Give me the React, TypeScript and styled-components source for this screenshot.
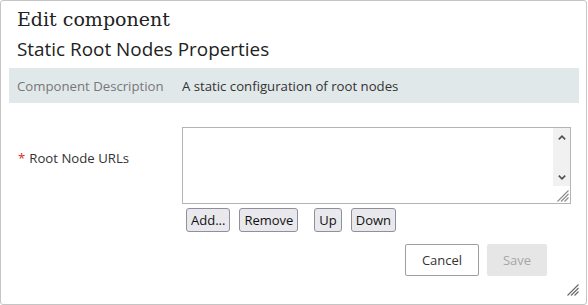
import React from "react";
import styled, { createGlobalStyle } from "styled-components";

const GlobalStyle = createGlobalStyle`
  html, body {
    margin: 0;
    padding: 0;
    background: #ffffff;
  }
  body {
    font-family: "Open Sans", "Noto Sans", sans-serif;
    color: #333333;
  }
`;

const Grip: React.FC<{ color: string }> = ({ color }) => (
  <svg width="12" height="12" viewBox="0 0 12 12" stroke={color} strokeWidth="1.1">
    <line x1="11.5" y1="0.5" x2="0.5" y2="11.5" />
    <line x1="11.5" y1="4" x2="4" y2="11.5" />
    <line x1="11.5" y1="7.5" x2="7.5" y2="11.5" />
  </svg>
);

const Chevron: React.FC<{ up?: boolean }> = ({ up }) => (
  <svg width="8" height="5" viewBox="0 0 8 5" fill="none" stroke="#505050" strokeWidth="1.6">
    {up ? <polyline points="0.8,4.4 4,1.2 7.2,4.4" /> : <polyline points="0.8,0.6 4,3.8 7.2,0.6" />}
  </svg>
);

const App: React.FC = () => {
  return (
    <>
      <GlobalStyle />
      <Dialog>
        <Title>Edit component</Title>
        <Subtitle>Static Root Nodes Properties</Subtitle>
        <DescriptionRow>
          <DescLabel>Component Description</DescLabel>
          <DescValue>A static configuration of root nodes</DescValue>
        </DescriptionRow>
        <FieldRow>
          <FieldLabel>
            <Required>*</Required>Root Node URLs
          </FieldLabel>
          <FieldControl>
            <ListBox>
              <ListInput />
              <Scrollbar>
                <Track>
                  <Chevron up />
                  <Chevron />
                </Track>
                <Corner>
                  <Grip color="#8a8a8a" />
                </Corner>
              </Scrollbar>
            </ListBox>
            <ListButtons>
              <SmallButton>Add...</SmallButton>
              <SmallButton>Remove</SmallButton>
              <SmallButton spaced>Up</SmallButton>
              <SmallButton>Down</SmallButton>
            </ListButtons>
          </FieldControl>
        </FieldRow>
        <Footer>
          <CancelButton>Cancel</CancelButton>
          <SaveButton disabled>Save</SaveButton>
        </Footer>
        <DialogGrip>
          <Grip color="#666666" />
        </DialogGrip>
      </Dialog>
    </>
  );
};

const Dialog = styled.div`
  position: relative;
  box-sizing: border-box;
  width: 587px;
  height: 305px;
  border: 1px solid #c5c5c5;
  border-radius: 3px;
  padding: 0 7px 0 8px;
  background: #ffffff;
`;

const Title = styled.h1`
  margin: 0;
  padding: 5px 0 0 8px;
  font-family: "DejaVu Serif", "Liberation Serif", serif;
  font-weight: normal;
  font-size: 19px;
  line-height: 26px;
  color: #222222;
`;

const Subtitle = styled.h2`
  margin: 0;
  padding: 4px 0 0 8px;
  font-size: 18.9px;
  font-weight: normal;
  line-height: 26px;
  color: #222222;
`;

const DescriptionRow = styled.div`
  display: grid;
  grid-template-columns: 165px 1fr;
  align-items: center;
  margin-top: 6px;
  height: 35px;
  padding-left: 8px;
  background: #e1e8ea;
  font-size: 13.2px;
`;

const DescLabel = styled.div`
  color: #777777;
`;

const DescValue = styled.div`
  color: #333333;
`;

const FieldRow = styled.div`
  display: grid;
  grid-template-columns: 165px 1fr;
  margin-top: 24px;
  padding-left: 8px;
`;

const FieldLabel = styled.div`
  padding-top: 22px;
  font-size: 13.2px;
  color: #333333;
`;

const Required = styled.span`
  color: #d9302c;
  margin: 0 4px 0 1px;
`;

const FieldControl = styled.div`
  display: flex;
  flex-direction: column;
`;

const ListBox = styled.div`
  display: flex;
  box-sizing: border-box;
  width: 389px;
  height: 77px;
  border: 1px solid #b4b4b4;
  background: #ffffff;
`;

const ListInput = styled.textarea`
  flex: 1;
  margin: 0;
  padding: 2px;
  border: none;
  outline: none;
  resize: none;
  font-family: "Open Sans", sans-serif;
  font-size: 13px;
`;

const Scrollbar = styled.div`
  display: flex;
  flex-direction: column;
  width: 17px;
`;

const Track = styled.div`
  flex: 1;
  display: flex;
  flex-direction: column;
  align-items: center;
  justify-content: space-between;
  padding: 7px 0 6px;
  background: #f1f1f1;
`;

const Corner = styled.div`
  display: flex;
  align-items: flex-end;
  justify-content: flex-end;
  height: 17px;
  padding: 0 1px 1px 0;
  box-sizing: border-box;
`;

const ListButtons = styled.div`
  display: flex;
  margin-top: 4px;
  padding-left: 4px;
`;

const SmallButton = styled.button<{ spaced?: boolean }>`
  height: 24px;
  margin: 0 9px 0 ${({ spaced }) => (spaced ? "7px" : "0")};
  padding: 0 4px;
  border: 1px solid #8f8f9d;
  border-radius: 3px;
  background: #e9e9ed;
  font-family: "Open Sans", sans-serif;
  font-size: 13px;
  color: #111111;
`;

const Footer = styled.div`
  display: flex;
  justify-content: flex-end;
  gap: 8px;
  margin-top: 12px;
  padding-right: 32px;
`;

const FooterButton = styled.button`
  box-sizing: border-box;
  height: 32px;
  border-radius: 2px;
  font-family: "Open Sans", sans-serif;
  font-size: 13px;
`;

const CancelButton = styled(FooterButton)`
  width: 74px;
  border: 1px solid #9e9e9e;
  background: #ffffff;
  color: #333333;
`;

const SaveButton = styled(FooterButton)`
  width: 60px;
  border: none;
  background: #e6e6e6;
  color: #a6a6a6;
`;

const DialogGrip = styled.div`
  position: absolute;
  right: 7px;
  bottom: 8px;
  display: flex;
`;

export default App;
